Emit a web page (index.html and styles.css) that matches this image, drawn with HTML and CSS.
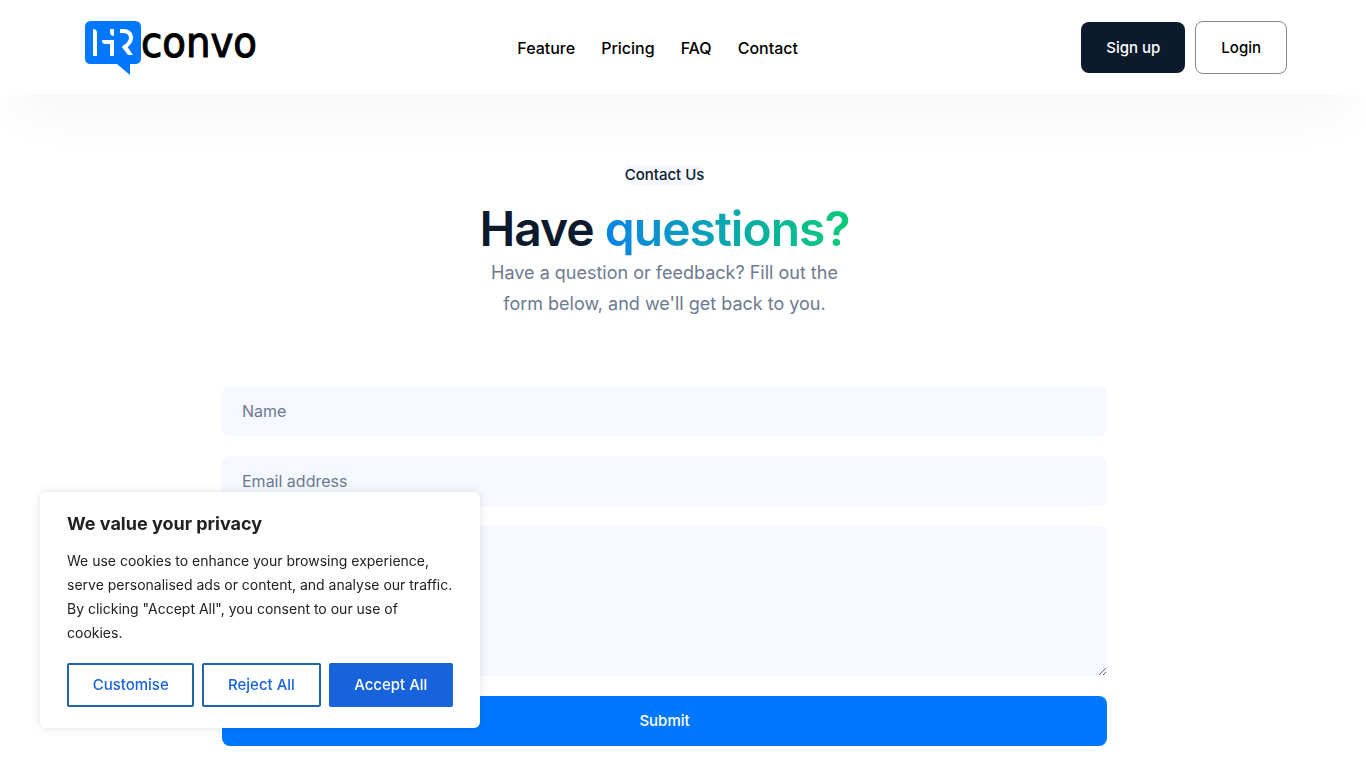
FILE: index.html
```
<!DOCTYPE html>
<html lang="en">

<head>
    <meta charset="UTF-8">
    <meta name="viewport" content="width=device-width, initial-scale=1.0">
    <title>HRConvo - Contact</title>
    <link rel="stylesheet" href="styles.css">
</head>

<body>
    <header class="site-header">
        <a class="logo" href="#" aria-label="HR convo">
            <svg class="logo-mark" width="56" height="54" viewBox="0 0 56 54" aria-hidden="true">
                <path fill="#0077ff" d="M6 0H50Q56 0 56 6V37Q56 43 50 43H45V54L32 43H6Q0 43 0 37V6Q0 0 6 0Z" />
                <path fill="#fff" d="M8 8Q12 8 12 12V35H8ZM17 19H29V35H25V23H20Q17 23 17 19ZM25 8H29V15Q25 15 25 11Z" />
                <path fill="none" stroke="#fff" stroke-width="4" d="M35 10H38C46 10 48 17 44 22C42 25 40 26 38 27" />
                <path fill="#fff" d="M37 26L42 25L48 34H43Z" />
            </svg>
            <span class="logo-text">convo</span>
        </a>
        <nav class="main-nav">
            <a href="#">Feature</a>
            <a href="#">Pricing</a>
            <a href="#">FAQ</a>
            <a href="#contact">Contact</a>
        </nav>
        <div class="header-buttons">
            <a class="btn btn-dark" href="#">Sign up</a>
            <a class="btn btn-outline" href="#">Login</a>
        </div>
    </header>

    <main id="contact" class="contact">
        <div class="contact-title">
            <span class="badge">Contact Us</span>
            <h1>Have <span class="gradient-text">questions?</span></h1>
            <p>Have a question or feedback? Fill out the form below, and we'll get back to you.</p>
        </div>
        <form class="contact-form">
            <input type="text" name="name" placeholder="Name" aria-label="Name">
            <input type="email" name="email" placeholder="Email address" aria-label="Email address">
            <textarea name="message" aria-label="Message"></textarea>
            <button type="submit">Submit</button>
        </form>
    </main>

    <section class="cookie-box" aria-labelledby="cookie-title">
        <h2 id="cookie-title">We value your privacy</h2>
        <p>We use cookies to enhance your browsing experience, serve personalised ads or content, and analyse our traffic. By clicking "Accept All", you consent to our use of cookies.</p>
        <div class="cookie-buttons">
            <button type="button" class="customise">Customise</button>
            <button type="button" class="reject">Reject All</button>
            <button type="button" class="accept">Accept All</button>
        </div>
    </section>
</body>

</html>
```
FILE: styles.css
```
* {
    box-sizing: border-box;
}

body {
    margin: 0;
    font-family: Inter, "Liberation Sans", sans-serif;
    font-size: 16px;
    color: #0b1a2c;
    background: #fff;
}

a {
    color: inherit;
    text-decoration: none;
}

/* Header */
.site-header {
    display: flex;
    justify-content: space-between;
    align-items: center;
    height: 95px;
    padding: 0 79px 0 85px;
    background: #fff;
    box-shadow: 0 30px 60px -20px rgba(11, 26, 60, 0.06);
}

.logo {
    display: flex;
    align-items: center;
    width: 171px;
    color: #000;
}

.logo-mark {
    flex: none;
}

.logo-text {
    font-family: "DejaVu Sans Condensed", "DejaVu Sans", sans-serif;
    font-size: 43px;
    line-height: 54px;
    height: 66px;
    -webkit-text-stroke: 1px #000;
}

.main-nav {
    display: flex;
    gap: 26px;
    margin-right: 22px;
    font-weight: 500;
    color: #000;
}

.header-buttons {
    display: flex;
    align-items: center;
    gap: 10px;
}

.btn {
    padding: 16px 25px;
    border-radius: 8px;
    font-size: 15px;
    line-height: 19px;
    font-weight: 500;
}

.btn-dark {
    background: #0b1a2c;
    color: #fff;
}

.btn-outline {
    border: 1px solid #888;
    color: #000;
}

/* Contact section */
.contact {
    padding: 70px 37px 22px 0;
}

.contact-title {
    display: flex;
    flex-direction: column;
    align-items: center;
    text-align: center;
}

.badge {
    border-radius: 8px;
    background: #f5f8ff;
    font-size: 15px;
    line-height: 20px;
    font-weight: 500;
}

h1 {
    margin: 16px 0 0;
    font-size: 48px;
    line-height: 56px;
    font-weight: 600;
    letter-spacing: -1px;
}

.gradient-text {
    background: linear-gradient(90deg, #0b84e5, #0acb78);
    -webkit-background-clip: text;
    background-clip: text;
    color: transparent;
}

.contact-title p {
    max-width: 380px;
    margin: 0;
    font-size: 18px;
    line-height: 31px;
    color: #6b7a90;
}

.contact-form {
    display: flex;
    flex-direction: column;
    gap: 20px;
    max-width: 885px;
    margin: 67px auto 0;
}

.contact-form input,
.contact-form textarea {
    height: 50px;
    padding: 0 20px;
    border: 0;
    border-radius: 8px;
    background: #f5f8ff;
    font-family: inherit;
    font-size: 16px;
}

.contact-form textarea {
    height: 150px;
    padding: 15px 20px;
}

.contact-form input::placeholder {
    color: #6b7a90;
}

.contact-form button {
    height: 50px;
    padding: 0 0 2px;
    border: 0;
    border-radius: 8px;
    background: #0077ff;
    color: #fff;
    font-family: inherit;
    font-size: 15px;
    font-weight: 500;
}

/* Cookie notice */
.cookie-box {
    position: fixed;
    left: 40px;
    bottom: 40px;
    width: 440px;
    padding: 20px 27px 21px;
    border-radius: 6px;
    background: #fff;
    box-shadow: 0 0 8px rgba(0, 0, 0, 0.12);
    color: #212121;
}

.cookie-box h2 {
    margin: 0;
    font-size: 18px;
    line-height: 24px;
    font-weight: 700;
}

.cookie-box p {
    margin: 13px 0 18px;
    font-size: 14px;
    line-height: 24px;
}

.cookie-buttons {
    display: flex;
    gap: 8px;
}

.cookie-buttons button {
    flex: auto;
    height: 44px;
    padding: 0 23px 2px;
    border: 2px solid #1f67a8;
    border-radius: 2px;
    background: transparent;
    color: #1863dc;
    font-family: inherit;
    font-size: 15px;
    font-weight: 500;
    white-space: nowrap;
}

.cookie-buttons .accept {
    border-color: #1863dc;
    background: #1863dc;
    color: #fff;
}
```
